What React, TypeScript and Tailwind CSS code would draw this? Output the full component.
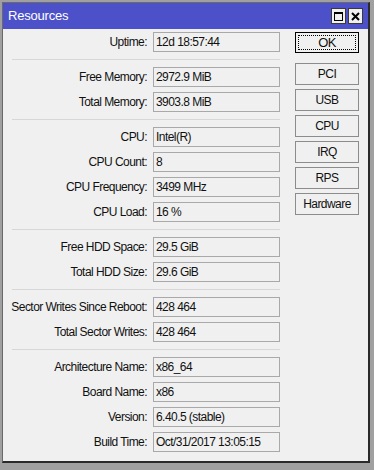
import React from 'react'

type Row = { label: string; value: string }

const groups: Row[][] = [
  [{ label: 'Uptime:', value: '12d 18:57:44' }],
  [
    { label: 'Free Memory:', value: '2972.9 MiB' },
    { label: 'Total Memory:', value: '3903.8 MiB' },
  ],
  [
    { label: 'CPU:', value: 'Intel(R)' },
    { label: 'CPU Count:', value: '8' },
    { label: 'CPU Frequency:', value: '3499 MHz' },
    { label: 'CPU Load:', value: '16 %' },
  ],
  [
    { label: 'Free HDD Space:', value: '29.5 GiB' },
    { label: 'Total HDD Size:', value: '29.6 GiB' },
  ],
  [
    { label: 'Sector Writes Since Reboot:', value: '428 464' },
    { label: 'Total Sector Writes:', value: '428 464' },
  ],
  [
    { label: 'Architecture Name:', value: 'x86_64' },
    { label: 'Board Name:', value: 'x86' },
    { label: 'Version:', value: '6.40.5 (stable)' },
    { label: 'Build Time:', value: 'Oct/31/2017 13:05:15' },
  ],
]

const buttons = ['PCI', 'USB', 'CPU', 'IRQ', 'RPS', 'Hardware']

const Field = ({ label, value }: Row) => (
  <div className="flex items-center h-[20px]">
    <div className="w-[144px] text-right whitespace-nowrap">{label}</div>
    <div className="ml-[6px] w-[127px] h-[20px] border border-[#a9a9a9] bg-[#f0f0f0] pl-[2px] flex items-center whitespace-nowrap">
      {value}
    </div>
  </div>
)

const App = () => {
  return (
    <div
      className="w-[374px] h-[470px] bg-[#a0a0a0] pl-[2px] pt-[2px] text-[12px] tracking-[-0.55px] text-[#111]"
      style={{ fontFamily: '"Liberation Sans", Arial, sans-serif' }}
    >
      <div className="w-[368px] h-[461px] bg-[#f0f0f0] border-l border-t border-[#6a6a6a] border-r-2 border-b-2 border-r-[#2a2a2a] border-b-[#2a2a2a] flex flex-col">
        {/* title bar */}
        <div className="h-[26px] bg-[#4d51c9] flex items-center pl-[5px] pr-[5px]">
          <span className="text-white text-[13px] tracking-[-0.2px]">Resources</span>
          <div className="ml-auto flex gap-[2px]">
            <div className="w-[15px] h-[16px] bg-[#f0f0f0] border border-[#3a3a3a] flex items-center justify-center">
              <div className="w-[9px] h-[9px] border-[1.5px] border-black border-t-2" />
            </div>
            <div className="w-[15px] h-[16px] bg-[#f0f0f0] border border-[#3a3a3a] flex items-center justify-center">
              <svg width="9" height="9" viewBox="0 0 9 9">
                <path d="M1 1 L8 8 M8 1 L1 8" stroke="black" strokeWidth="2" />
              </svg>
            </div>
          </div>
        </div>

        <div className="flex pt-[3px]">
          {/* fields */}
          <div className="flex flex-col">
            {groups.map((g, gi) => (
              <div key={gi}>
                {gi > 0 && <div className="ml-[9px] w-[268px] h-px bg-[#d7d7d7] my-[7px]" />}
                <div className="flex flex-col gap-[5px]">
                  {g.map((r) => (
                    <Field key={r.label} {...r} />
                  ))}
                </div>
              </div>
            ))}
          </div>

          {/* buttons */}
          <div className="ml-[15px] flex flex-col">
            <button className="w-[64px] h-[21px] border border-black bg-[#f0f0f0] p-[2px] text-[13px]">
              <div className="w-full h-full border border-dotted border-black flex items-center justify-center">
                OK
              </div>
            </button>
            <div className="mt-[10px] flex flex-col gap-[4px]">
              {buttons.map((b) => (
                <button
                  key={b}
                  className="w-[64px] h-[22px] border border-[#8c8c8c] bg-[#f0f0f0] flex items-center justify-center"
                >
                  {b}
                </button>
              ))}
            </div>
          </div>
        </div>
      </div>
    </div>
  )
}

export default App
